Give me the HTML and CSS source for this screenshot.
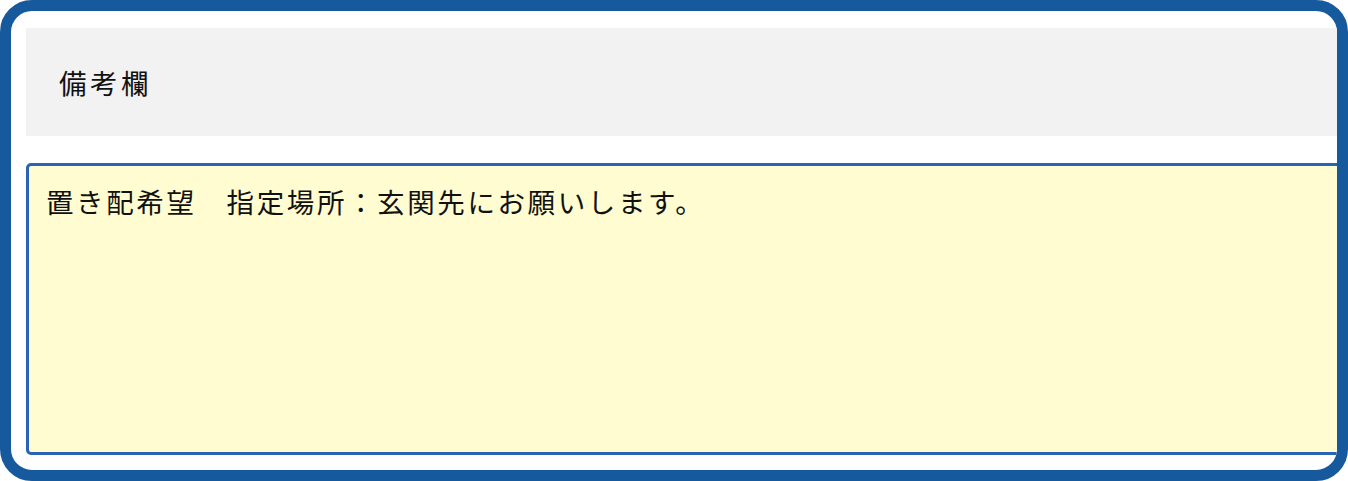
FILE: index.html
```html
<!DOCTYPE html>
<html lang="ja">
<head>
  <meta charset="UTF-8">
  <meta name="viewport" content="width=device-width, initial-scale=1.0">
  <title>備考欄</title>
  <link rel="stylesheet" href="styles.css">
</head>
<body>
  <div class="marco">
    <div class="contenido">
      <div class="titulo-bloque">備考欄</div>
      <textarea class="campo-nota" readonly>置き配希望　指定場所：玄関先にお願いします。</textarea>
    </div>
  </div>
</body>
</html>
```

FILE: styles.css
```css
/* Estilos generales */
body {
  margin: 0;
  background-color: #fff;
  font-family: "Noto Sans CJK JP", "Noto Sans", sans-serif;
  color: #111;
}
.marco {
  box-sizing: border-box;
  width: 1348px;
  height: 481px;
  border: 11px solid #17599d;
  border-radius: 32px;
  background-color: #fff;
  overflow: hidden;
}
.contenido {
  display: flex;
  flex-direction: column;
  gap: 27px;
  padding: 17px 0 15px 15px;
  height: 100%;
  box-sizing: border-box;
}
.titulo-bloque {
  flex: none;
  width: 1340px;
  height: 108px;
  display: flex;
  align-items: center;
  padding-left: 33px;
  box-sizing: border-box;
  background-color: #f2f2f2;
  font-size: 27.5px;
  letter-spacing: 3.5px;
}
/* Campo de texto */
.campo-nota {
  flex: 1;
  width: 1340px;
  box-sizing: border-box;
  margin: 0;
  padding: 15px 17px;
  border: 3px solid #2a62b4;
  border-radius: 5px;
  background-color: #fefcd0;
  font-family: "Noto Sans CJK JP", "Noto Sans", sans-serif;
  font-size: 27.5px;
  letter-spacing: 2.6px;
  line-height: 1.5;
  color: #111;
  resize: none;
  outline: none;
}
```
